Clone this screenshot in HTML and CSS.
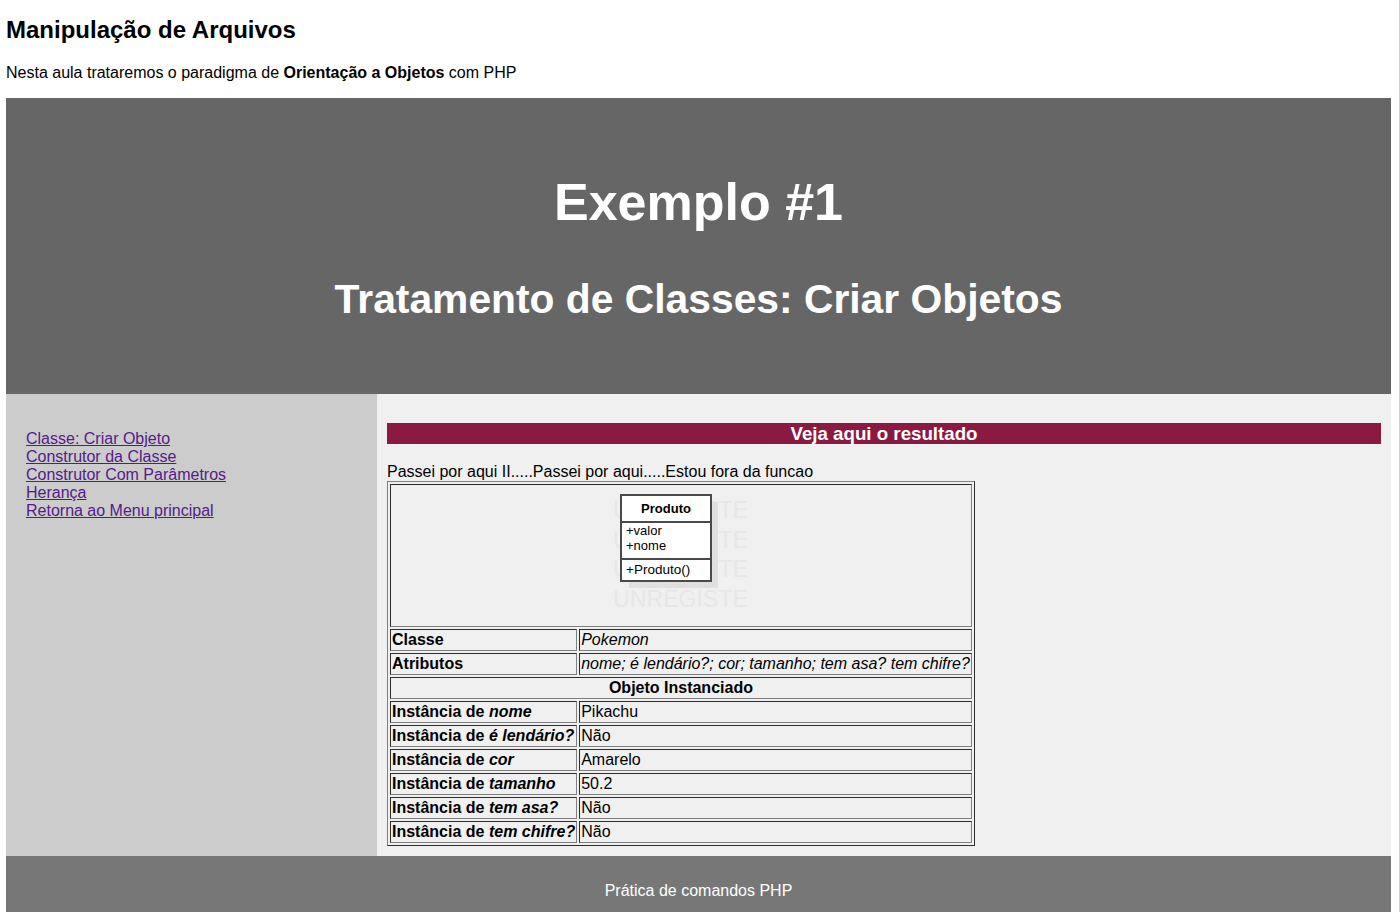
FILE: index.html
```html
<!DOCTYPE html>
<html lang="pt-BR">
<head>
<meta charset="utf-8">
<title>Manipulação de Arquivos</title>
<link rel="stylesheet" href="styles.css">
</head>
<body>
<header class="page-head">
  <h1 class="page-title">Manipulação de Arquivos</h1>
  <p class="intro">Nesta aula trataremos o paradigma de <strong>Orientação a Objetos</strong> com PHP</p>
</header>

<section class="banner">
  <h2 class="banner-title">Exemplo #1</h2>
  <h3 class="banner-sub">Tratamento de Classes: Criar Objetos</h3>
</section>

<main class="middle">
  <nav class="sidebar">
    <a href="#" class="nav-link">Classe: Criar Objeto</a>
    <a href="#" class="nav-link">Construtor da Classe</a>
    <a href="#" class="nav-link">Construtor Com Parâmetros</a>
    <a href="#" class="nav-link">Herança</a>
    <a href="#" class="nav-link">Retorna ao Menu principal</a>
  </nav>
  <div class="content">
    <h4 class="result-bar">Veja aqui o resultado</h4>
    <div class="output-line">Passei por aqui II.....Passei por aqui.....Estou fora da funcao</div>
    <table class="result">
      <tr>
        <td colspan="2" class="diagram-cell">
          <svg class="uml" width="144" height="139" viewBox="0 0 144 139" xmlns="http://www.w3.org/2000/svg">
            <g fill="#e7e7e7" font-family="Liberation Sans, Arial, sans-serif" font-size="23">
              <text x="4" y="31.5" textLength="135" lengthAdjust="spacingAndGlyphs">UNREGISTE</text>
              <text x="4" y="61.5" textLength="135" lengthAdjust="spacingAndGlyphs">UNREGISTE</text>
              <text x="4" y="91" textLength="135" lengthAdjust="spacingAndGlyphs">UNREGISTE</text>
              <text x="4" y="120.5" textLength="135" lengthAdjust="spacingAndGlyphs">UNREGISTE</text>
            </g>
            <rect x="20" y="16" width="89" height="86" fill="#e0e0e0"/>
            <rect x="12" y="9" width="90" height="86" fill="#ffffff" stroke="#4a4a4a" stroke-width="2"/>
            <line x1="12" y1="36" x2="102" y2="36" stroke="#4a4a4a" stroke-width="2"/>
            <line x1="12" y1="73" x2="102" y2="73" stroke="#4a4a4a" stroke-width="2"/>
            <g fill="#000" font-family="Liberation Sans, Arial, sans-serif" font-size="13">
              <text x="57" y="27" text-anchor="middle" font-weight="bold">Produto</text>
              <text x="17" y="49">+valor</text>
              <text x="17" y="64">+nome</text>
              <text x="17" y="88" font-size="13.5">+Produto()</text>
            </g>
          </svg>
        </td>
      </tr>
      <tr><td class="label">Classe</td><td class="value"><em>Pokemon</em></td></tr>
      <tr><td class="label">Atributos</td><td class="value"><em>nome; é lendário?; cor; tamanho; tem asa? tem chifre?</em></td></tr>
      <tr><td colspan="2" class="label centered">Objeto Instanciado</td></tr>
      <tr><td class="label">Instância de <em>nome</em></td><td class="value">Pikachu</td></tr>
      <tr><td class="label">Instância de <em>é lendário?</em></td><td class="value">Não</td></tr>
      <tr><td class="label">Instância de <em>cor</em></td><td class="value">Amarelo</td></tr>
      <tr><td class="label">Instância de <em>tamanho</em></td><td class="value">50.2</td></tr>
      <tr><td class="label">Instância de <em>tem asa?</em></td><td class="value">Não</td></tr>
      <tr><td class="label">Instância de <em>tem chifre?</em></td><td class="value">Não</td></tr>
    </table>
  </div>
</main>

<footer class="footer">Prática de comandos PHP</footer>
</body>
</html>
```

FILE: styles.css
```css
html {
  background: #ffffff;
  border-right: 1px solid #cfcfcf;
}

body {
  margin: 0 8px 0 6px;
  font-family: "Liberation Sans", Arial, sans-serif;
  font-size: 16px;
  line-height: 18px;
  color: #000;
}

.page-head {
  overflow: hidden;
}

.page-title {
  margin: 16px 0 20px;
  font-size: 24px;
  line-height: 28px;
  font-weight: bold;
}

.intro {
  margin: 0 0 16px;
}

.banner {
  background: #666666;
  color: #ffffff;
  text-align: center;
  padding: 74px 0 72px;
}

.banner-title {
  margin: 0;
  font-size: 52px;
  line-height: 60px;
  font-weight: bold;
}

.banner-sub {
  margin: 44px 0 0;
  font-size: 40.8px;
  line-height: 46px;
  font-weight: bold;
}

.middle {
  display: flex;
}

.sidebar {
  width: 371px;
  flex: none;
  box-sizing: border-box;
  background: #cccccc;
  padding: 36px 20px;
  display: flex;
  flex-direction: column;
  align-items: flex-start;
}

.nav-link {
  color: #551a8b;
  text-decoration: underline;
}

.content {
  flex: 1;
  background: #f0f0f0;
  padding: 29px 10px 10px;
}

.result-bar {
  margin: 0;
  background: #8a1a42;
  color: #ffffff;
  text-align: center;
  font-size: 18.72px;
  line-height: 21px;
  font-weight: bold;
}

.output-line {
  margin-top: 19px;
}

.result {
  border: 1px outset gray;
  border-collapse: separate;
  border-spacing: 2px;
}

.result td {
  border: 1px inset gray;
  padding: 1px;
  white-space: nowrap;
}

.diagram-cell {
  text-align: center;
}

.uml {
  display: block;
  margin: 0 auto;
}

.label {
  font-weight: bold;
}

.centered {
  text-align: center;
}

.footer {
  background: #777777;
  color: #ffffff;
  text-align: center;
  padding: 26px 0 12px;
}
```
